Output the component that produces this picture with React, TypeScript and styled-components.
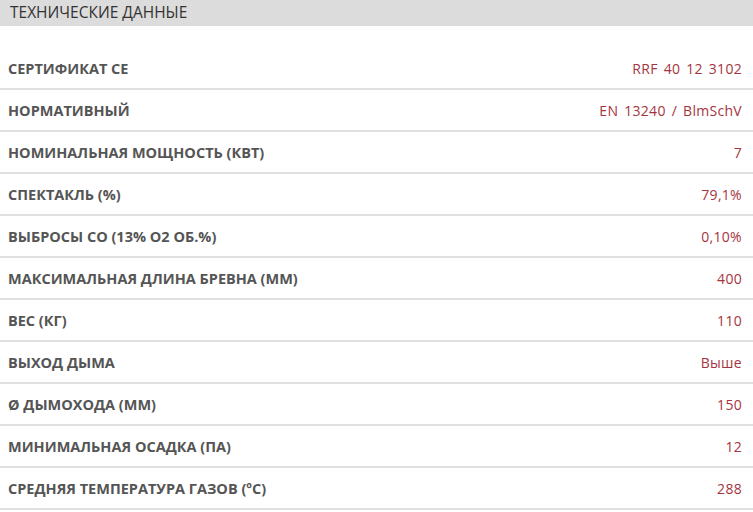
import React from 'react'
import styled, { createGlobalStyle } from 'styled-components'

const GlobalStyle = createGlobalStyle`
  body {
    margin: 0;
    background: #fff;
    font-family: 'Open Sans', 'Noto Sans', sans-serif;
  }
`

const specs: [string, string][] = [
  ['СЕРТИФИКАТ CE', 'RRF 40 12 3102'],
  ['НОРМАТИВНЫЙ', 'EN 13240 / BlmSchV'],
  ['НОМИНАЛЬНАЯ МОЩНОСТЬ (КВТ)', '7'],
  ['СПЕКТАКЛЬ (%)', '79,1%'],
  ['ВЫБРОСЫ CO (13% O2 ОБ.%)', '0,10%'],
  ['МАКСИМАЛЬНАЯ ДЛИНА БРЕВНА (ММ)', '400'],
  ['ВЕС (КГ)', '110'],
  ['ВЫХОД ДЫМА', 'Выше'],
  ['Ø ДЫМОХОДА (ММ)', '150'],
  ['МИНИМАЛЬНАЯ ОСАДКА (ПА)', '12'],
  ['СРЕДНЯЯ ТЕМПЕРАТУРА ГАЗОВ (ºC)', '288'],
]

const App = () => {
  return (
    <Wrapper>
      <GlobalStyle />
      <Header>ТЕХНИЧЕСКИЕ ДАННЫЕ</Header>
      <Table>
        {specs.map(([label, value]) => (
          <Row key={label}>
            <Label>{label}</Label>
            <Value>{value}</Value>
          </Row>
        ))}
      </Table>
    </Wrapper>
  )
}

export default App

const Wrapper = styled.div`
  width: 753px;
  display: flex;
  flex-direction: column;
`

const Header = styled.div`
  height: 26px;
  background: #dcdcdc;
  padding: 0 10px;
  display: flex;
  align-items: center;
  color: #333;
  font-size: 15.5px;
  line-height: 1;
`

const Table = styled.div`
  display: flex;
  flex-direction: column;
  padding-top: 22px;
`

const Row = styled.div`
  height: 40px;
  display: flex;
  align-items: center;
  justify-content: space-between;
  padding: 0 11px 0 8px;
  border-bottom: 2px solid #e0e0e0;
`

const Label = styled.span`
  color: #555;
  font-weight: 700;
  font-size: 14.5px;
`

const Value = styled.span`
  color: #a53440;
  font-weight: 400;
  font-size: 14px;
  letter-spacing: 0.3px;
  word-spacing: 2px;
`
